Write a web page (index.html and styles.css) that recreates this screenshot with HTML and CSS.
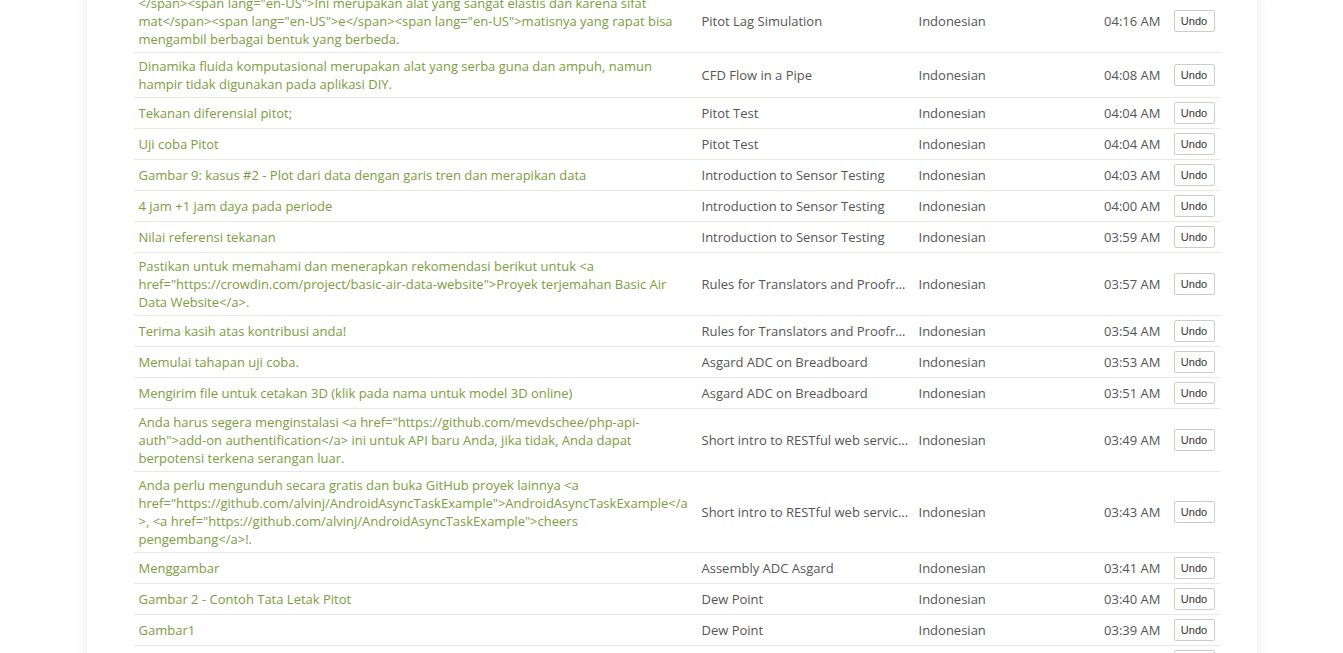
FILE: index.html
```html
<!DOCTYPE html>
<html>
<head>
<meta charset="utf-8">
<link rel="stylesheet" href="styles.css">
</head>
<body>
<div class="card">
  <table class="log">
    <colgroup>
      <col class="c-text"><col class="c-proj"><col class="c-lang"><col class="c-time"><col class="c-act">
    </colgroup>
    <tbody>
      <tr><td class="t">&lt;/span&gt;&lt;span lang="en-US"&gt;Ini merupakan alat yang sangat elastis dan karena sifat mat&lt;/span&gt;&lt;span lang="en-US"&gt;e&lt;/span&gt;&lt;span lang="en-US"&gt;matisnya yang rapat bisa mengambil berbagai bentuk yang berbeda.</td><td class="p">Pitot Lag Simulation</td><td class="l">Indonesian</td><td class="tm">04:16 AM</td><td class="a"><button class="undo">Undo</button></td></tr>
      <tr><td class="t">Dinamika fluida komputasional merupakan alat yang serba guna dan ampuh, namun hampir tidak digunakan pada aplikasi DIY.</td><td class="p">CFD Flow in a Pipe</td><td class="l">Indonesian</td><td class="tm">04:08 AM</td><td class="a"><button class="undo">Undo</button></td></tr>
      <tr><td class="t">Tekanan diferensial pitot;</td><td class="p">Pitot Test</td><td class="l">Indonesian</td><td class="tm">04:04 AM</td><td class="a"><button class="undo">Undo</button></td></tr>
      <tr><td class="t">Uji coba Pitot</td><td class="p">Pitot Test</td><td class="l">Indonesian</td><td class="tm">04:04 AM</td><td class="a"><button class="undo">Undo</button></td></tr>
      <tr><td class="t">Gambar 9: kasus #2 - Plot dari data dengan garis tren dan merapikan data</td><td class="p">Introduction to Sensor Testing</td><td class="l">Indonesian</td><td class="tm">04:03 AM</td><td class="a"><button class="undo">Undo</button></td></tr>
      <tr><td class="t">4 jam +1 jam daya pada periode</td><td class="p">Introduction to Sensor Testing</td><td class="l">Indonesian</td><td class="tm">04:00 AM</td><td class="a"><button class="undo">Undo</button></td></tr>
      <tr><td class="t">Nilai referensi tekanan</td><td class="p">Introduction to Sensor Testing</td><td class="l">Indonesian</td><td class="tm">03:59 AM</td><td class="a"><button class="undo">Undo</button></td></tr>
      <tr><td class="t">Pastikan untuk memahami dan menerapkan rekomendasi berikut untuk &lt;a href="https://crowdin.com/project/basic-air-data-website"&gt;Proyek terjemahan Basic Air Data Website&lt;/a&gt;.</td><td class="p">Rules for Translators and Proofreaders</td><td class="l">Indonesian</td><td class="tm">03:57 AM</td><td class="a"><button class="undo">Undo</button></td></tr>
      <tr><td class="t">Terima kasih atas kontribusi anda!</td><td class="p">Rules for Translators and Proofreaders</td><td class="l">Indonesian</td><td class="tm">03:54 AM</td><td class="a"><button class="undo">Undo</button></td></tr>
      <tr><td class="t">Memulai tahapan uji coba.</td><td class="p">Asgard ADC on Breadboard</td><td class="l">Indonesian</td><td class="tm">03:53 AM</td><td class="a"><button class="undo">Undo</button></td></tr>
      <tr><td class="t">Mengirim file untuk cetakan 3D (klik pada nama untuk model 3D online)</td><td class="p">Asgard ADC on Breadboard</td><td class="l">Indonesian</td><td class="tm">03:51 AM</td><td class="a"><button class="undo">Undo</button></td></tr>
      <tr><td class="t">Anda harus segera menginstalasi &lt;a href="https://github.com/mevdschee/php-api-auth"&gt;add-on authentification&lt;/a&gt; ini untuk API baru Anda, jika tidak, Anda dapat berpotensi terkena serangan luar.</td><td class="p">Short intro to RESTful web services</td><td class="l">Indonesian</td><td class="tm">03:49 AM</td><td class="a"><button class="undo">Undo</button></td></tr>
      <tr><td class="t">Anda perlu mengunduh secara gratis dan buka GitHub proyek lainnya &lt;a href="https://github.com/alvinj/AndroidAsyncTaskExample"&gt;AndroidAsyncTaskExample&lt;/a&gt;, &lt;a href="https://github.com/alvinj/AndroidAsyncTaskExample"&gt;cheers pengembang&lt;/a&gt;!.</td><td class="p">Short intro to RESTful web services</td><td class="l">Indonesian</td><td class="tm">03:43 AM</td><td class="a"><button class="undo">Undo</button></td></tr>
      <tr><td class="t">Menggambar</td><td class="p">Assembly ADC Asgard</td><td class="l">Indonesian</td><td class="tm">03:41 AM</td><td class="a"><button class="undo">Undo</button></td></tr>
      <tr><td class="t">Gambar 2 - Contoh Tata Letak Pitot</td><td class="p">Dew Point</td><td class="l">Indonesian</td><td class="tm">03:40 AM</td><td class="a"><button class="undo">Undo</button></td></tr>
      <tr><td class="t">Gambar1</td><td class="p">Dew Point</td><td class="l">Indonesian</td><td class="tm">03:39 AM</td><td class="a"><button class="undo">Undo</button></td></tr>
      <tr><td class="t">Gambar 3 - Contoh Tata Letak Pitot</td><td class="p">Dew Point</td><td class="l">Indonesian</td><td class="tm">03:38 AM</td><td class="a"><button class="undo">Undo</button></td></tr>
    </tbody>
  </table>
</div>
</body>
</html>
```

FILE: styles.css
```css
html, body {
  margin: 0;
  padding: 0;
  background: #ffffff;
  overflow: hidden;
}
body {
  font-family: "Open Sans", "Liberation Sans", sans-serif;
  font-size: 13px;
  line-height: 18px;
  color: #555555;
}
.card {
  width: 1170px;
  margin: -10px auto 0;
  background: #ffffff;
  box-shadow: 0 0 12px rgba(0, 0, 0, 0.09);
  padding: 0 37px 0 47px;
  box-sizing: border-box;
  min-height: 800px;
}
.log {
  width: 1086px;
  border-collapse: collapse;
  table-layout: fixed;
}
.c-text { width: 563px; }
.c-proj { width: 217px; }
.c-lang { width: 130px; }
.c-time { width: 125px; }
.c-act { width: 51px; }
.log td {
  padding: 4px 5px;
  vertical-align: middle;
  border-bottom: 1px solid #e9e9e4;
}
.log td.t {
  color: #7c9d40;
  overflow-wrap: break-word;
  word-wrap: break-word;
}
.log td.p {
  white-space: nowrap;
  overflow: hidden;
  text-overflow: ellipsis;
}
.log td.tm {
  text-align: right;
  padding-right: 8px;
}
.log td.a {
  text-align: right;
}
.undo {
  display: inline-block;
  box-sizing: border-box;
  width: 41px;
  height: 22px;
  padding: 0;
  margin: 0;
  border: 1px solid #cccccc;
  border-radius: 2px;
  background: #ffffff;
  color: #333333;
  font-family: "Liberation Sans", Arial, sans-serif;
  font-size: 11px;
  line-height: 20px;
  vertical-align: middle;
}
```
